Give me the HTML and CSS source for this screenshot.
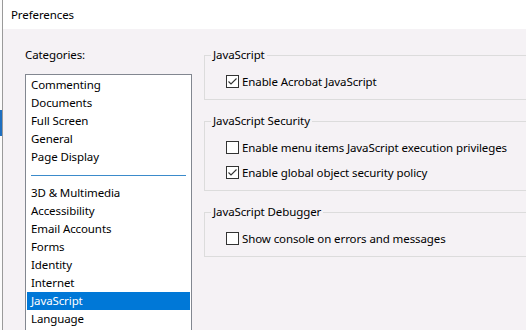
FILE: index.html
```html
<!DOCTYPE html>
<html lang="en">
  <head>
    <meta charset="UTF-8" />
    <title>Preferences</title>
    <link rel="stylesheet" href="styles.css">
  </head>
  <body>
    <div class="window">
      <div class="title-bar">Preferences</div>
      <div class="content">
        <div class="categories">
          <div class="categories-label">Categories:</div>
          <ul class="list">
            <li>Commenting</li>
            <li>Documents</li>
            <li>Full Screen</li>
            <li>General</li>
            <li>Page Display</li>
            <li class="separator"><span></span></li>
            <li>3D &amp; Multimedia</li>
            <li>Accessibility</li>
            <li>Email Accounts</li>
            <li>Forms</li>
            <li>Identity</li>
            <li>Internet</li>
            <li class="selected">JavaScript</li>
            <li>Language</li>
          </ul>
        </div>
        <div class="settings">
          <fieldset class="group">
            <legend>JavaScript</legend>
            <label class="check-row"><span class="box checked"></span>Enable Acrobat JavaScript</label>
          </fieldset>
          <fieldset class="group">
            <legend>JavaScript Security</legend>
            <label class="check-row"><span class="box"></span>Enable menu items JavaScript execution privileges</label>
            <label class="check-row"><span class="box checked"></span>Enable global object security policy</label>
          </fieldset>
          <fieldset class="group">
            <legend>JavaScript Debugger</legend>
            <label class="check-row"><span class="box"></span>Show console on errors and messages</label>
          </fieldset>
        </div>
      </div>
    </div>
  </body>
</html>
```

FILE: styles.css
```css
* {
  box-sizing: border-box;
}

html,
body {
  height: 100%;
}

body {
  margin: 0;
  padding-left: 2px;
  /* bit of the desktop showing behind the dialog edge */
  background: linear-gradient(#fbfbfb 110px, #1e6fc0 110px, #1e6fc0 136px, #fbfbfb 136px);
  font-family: "Noto Sans", sans-serif;
  font-size: 11.5px;
  letter-spacing: -0.1px;
  color: #000;
  overflow: hidden;
}

.window {
  height: 100%;
  border-left: 1px solid #9a9a9a;
  background: #f5f2f5;
  overflow: hidden;
}

.title-bar {
  height: 29px;
  line-height: 29px;
  padding-left: 8px;
  background: #fff;
}

.content {
  display: flex;
  padding-top: 18px;
}

.categories {
  width: 201px;
  padding-left: 22px;
  flex-shrink: 0;
}

.categories-label {
  line-height: 16px;
}

.list {
  list-style: none;
  margin: 11px 0 0;
  padding: 1px;
  width: 167px;
  height: 260px;
  overflow: hidden;
  background: #fff;
  border: 1px solid #828790;
}

.list li {
  height: 18px;
  line-height: 18px;
  padding-left: 4px;
  white-space: nowrap;
}

.list .separator {
  display: flex;
  align-items: center;
  padding: 0 4px;
}

.separator span {
  flex: 1;
  height: 1px;
  background: #3b8bcb;
}

.list .selected {
  background: #0078d7;
  color: #fff;
}

.settings {
  flex-shrink: 0;
  width: 340px;
}

.group {
  margin: 0 0 13px;
  padding: 2px 0 9px;
  border: 1px solid #dcdcdc;
}

.group legend {
  margin-left: 6px;
  padding: 0 2px;
  line-height: 16px;
}

.check-row {
  display: flex;
  align-items: center;
  height: 18px;
  margin: 7px 0 0 21px;
  white-space: nowrap;
}

.box {
  width: 13px;
  height: 13px;
  margin-right: 3px;
  border: 1px solid #333;
  background: #fff;
  flex-shrink: 0;
}

.box.checked {
  background: #fff url("data:image/svg+xml,%3Csvg xmlns='http://www.w3.org/2000/svg' width='11' height='11' viewBox='0 0 11 11'%3E%3Cpath d='M1.5 5.5 L4 8 L9.5 2.5' fill='none' stroke='%23333' stroke-width='1.1'/%3E%3C/svg%3E") no-repeat center;
}
```
